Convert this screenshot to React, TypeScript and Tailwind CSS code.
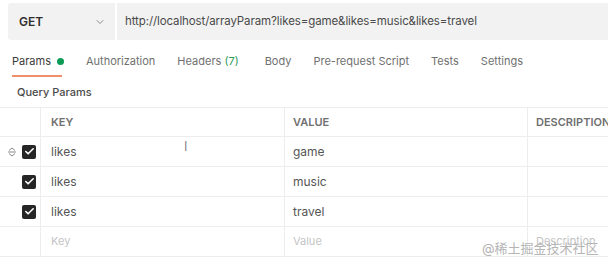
import React from 'react';
import { Check, ChevronDown } from 'lucide-react';

const tabs = [
  { label: 'Authorization' },
  { label: 'Headers', count: '(7)' },
  { label: 'Body' },
  { label: 'Pre-request Script' },
  { label: 'Tests' },
  { label: 'Settings' },
];

const rows = [
  { key: 'likes', value: 'game', handle: true },
  { key: 'likes', value: 'music' },
  { key: 'likes', value: 'travel' },
];

const DragHandle = () => (
  <svg width="10" height="10" viewBox="0 0 10 10" className="text-[#8a8a8a]">
    <path d="M2 3.5 L5 1 L8 3.5 M1 5 H9 M2 6.5 L5 9 L8 6.5" stroke="currentColor" strokeWidth="1" fill="none" />
  </svg>
);

const Checkbox = () => (
  <div className="w-[14px] h-[14px] rounded-[2px] bg-[#262626] flex items-center justify-center">
    <Check className="w-[11px] h-[11px] text-white" strokeWidth={3.5} />
  </div>
);

const App: React.FC = () => {
  return (
    <div className="w-[608px] h-[266px] bg-white overflow-hidden text-[12px] text-[#3a3a3a]" style={{ fontFamily: 'Inter, "Noto Sans CJK SC", sans-serif' }}>
      {/* Request bar */}
      <div className="pl-[8px] pt-[3px] flex h-[40px] gap-[2px]">
        <div className="w-[107px] h-[37px] bg-[#f2f2f2] rounded-l-[3px] flex items-center pl-[11px] pr-[9px] justify-between">
          <span className="font-semibold text-[12px] text-[#2f2f2f]">GET</span>
          <ChevronDown className="w-[12px] h-[12px] text-[#8c8c8c]" />
        </div>
        <div className="flex-1 h-[37px] bg-[#f2f2f2] flex items-center pl-[8px] text-[#4a4a4a] text-[11.5px] tracking-[-0.1px]">
          http://localhost/arrayParam?likes=game&amp;likes=music&amp;likes=travel
        </div>
      </div>

      {/* Tabs */}
      <div className="flex items-start pl-[12px] pt-[13px] h-[37px] gap-[22px] text-[11px] text-[#707070]">
        <div className="flex flex-col">
          <div className="flex items-center gap-[6px] text-[#3a3a3a]">
            <span>Params</span>
            <span className="w-[7px] h-[7px] rounded-full bg-[#0c9b55]" />
          </div>
          <div className="mt-[5px] h-[2px] w-[50px] bg-[#f0906b]" />
        </div>
        {tabs.map((t) => (
          <span key={t.label} className={t.label === 'Body' ? 'ml-[4px]' : ''}>
            {t.label}
            {t.count && <span className="text-[#2e9a5a]"> {t.count}</span>}
          </span>
        ))}
      </div>

      {/* Query Params */}
      <div className="pl-[17px] h-[30px] pt-[7px] font-medium text-[11px] text-[#4a4a4a]">Query Params</div>

      {/* Table */}
      <div className="grid grid-cols-[41px_244px_243px_1fr] border-t border-[#ededed]">
        <div className="h-[29px] border-b border-r border-[#ededed]" />
        <div className="h-[29px] border-b border-r border-[#ededed] flex items-center pl-[10px] font-semibold text-[11px] text-[#707070]">KEY</div>
        <div className="h-[29px] border-b border-r border-[#ededed] flex items-center pl-[8px] font-semibold text-[11px] text-[#707070]">VALUE</div>
        <div className="h-[29px] border-b border-[#ededed] flex items-center pl-[8px] font-semibold text-[11px] text-[#707070] whitespace-nowrap">DESCRIPTION</div>

        {rows.map((r, i) => (
          <React.Fragment key={i}>
            <div className="h-[30px] border-b border-r border-[#ededed] flex items-center justify-end pr-[4px] gap-[5px]">
              {r.handle && <DragHandle />}
              <Checkbox />
            </div>
            <div className="relative h-[30px] border-b border-r border-[#ededed] flex items-center pl-[10px] text-[#555]">
              {r.key}
              {r.handle && <span className="absolute left-[143px] top-[0px] text-[#666] text-[13px] font-light">I</span>}
            </div>
            <div className="h-[30px] border-b border-r border-[#ededed] flex items-center pl-[8px] text-[#555]">{r.value}</div>
            <div className="h-[30px] border-b border-[#ededed]" />
          </React.Fragment>
        ))}

        <div className="h-[30px] border-b border-r border-[#ededed]" />
        <div className="h-[30px] border-b border-r border-[#ededed] flex items-center pl-[10px] text-[#c4c4c4] text-[11px]">Key</div>
        <div className="h-[30px] border-b border-r border-[#ededed] flex items-center pl-[8px] text-[#c4c4c4] text-[11px]">Value</div>
        <div className="relative h-[30px] border-b border-[#ededed] flex items-center pl-[8px] text-[#c4c4c4] text-[11px]">
          Description
          <span className="absolute left-[-46px] top-[12px] text-[13px] text-[#b5b5b5] whitespace-nowrap">@稀土掘金技术社区</span>
        </div>
      </div>
    </div>
  );
};

export default App;
